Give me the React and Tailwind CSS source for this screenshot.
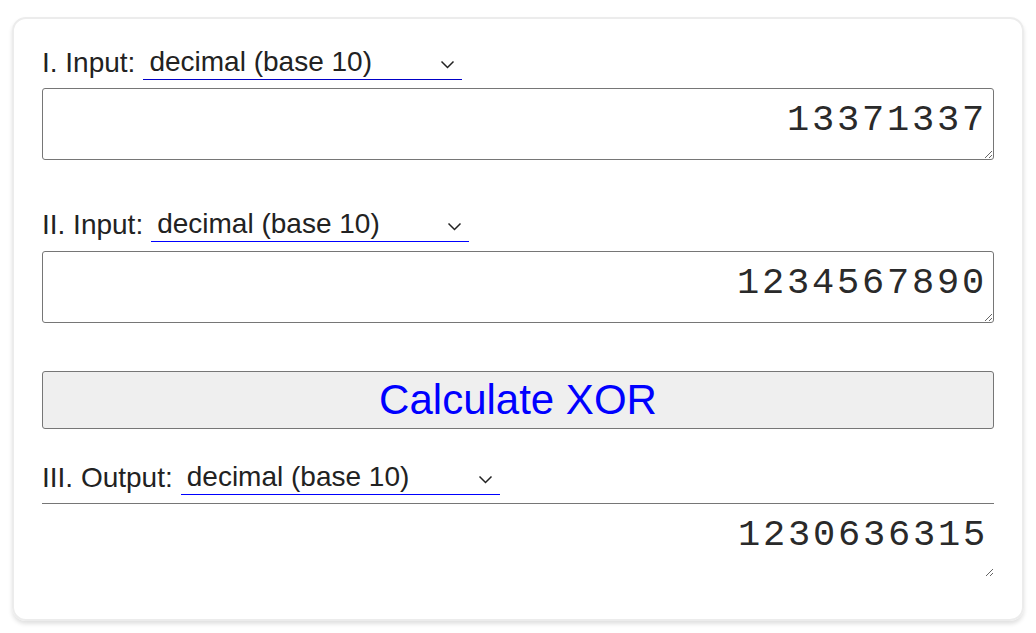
import React from 'react';

const Chevron = () => (
  <svg className="absolute right-[7px] top-[15px] pointer-events-none" width="15" height="9" viewBox="0 0 15 9" fill="none">
    <polyline points="1.5,1.5 7.5,7.5 13.5,1.5" stroke="#222" strokeWidth="1.5" />
  </svg>
);

const BaseSelect = ({ line, width }) => (
  <div className={`relative ${width}`}>
    <select
      defaultValue="10"
      className={`block appearance-none w-full h-[35px] pl-[6px] pr-[30px] pb-[1px] bg-transparent text-[28px] leading-[32px] text-[#222] border-0 border-b rounded-none outline-none ${line}`}
      style={{ fontFamily: '"Liberation Sans", Arial, sans-serif' }}
    >
      <option value="2">binary (base 2)</option>
      <option value="8">octal (base 8)</option>
      <option value="10">decimal (base 10)</option>
      <option value="16">hexadecimal (base 16)</option>
    </select>
    <Chevron />
  </div>
);

const Row = ({ label, line, width, className }) => (
  <div className={`flex items-end h-[35px] gap-[8px] ${className}`}>
    <span className="text-[28px] text-[#222] leading-[32px] pb-[1px]">{label}</span>
    <BaseSelect line={line} width={width} />
  </div>
);

const mono = { fontFamily: '"Liberation Mono", "Courier New", monospace' };
const area = 'block w-full text-right text-[37px] tracking-[2.8px] text-[#2a2a2a] pr-[6px] pt-[11px] leading-[40px] outline-none';

export default function App() {
  return (
    <div className="w-[1036px] h-[633px] bg-white pt-[17px] px-[12px]" style={{ fontFamily: '"Liberation Sans", Arial, sans-serif' }}>
      <div className="w-[1012px] border-2 border-[#ececec] rounded-[14px] shadow-[0_3px_4px_rgba(0,0,0,0.12)] px-[28px] pt-[26px] pb-[42px]">
        <Row label="I. Input:" line="border-[#0000c8]" width="w-[319px]" />
        <textarea
          defaultValue="13371337"
          className={`${area} mt-[8px] h-[72px] border border-[#767676] rounded-[3px]`}
          style={mono}
        />

        <Row label="II. Input:" line="border-[#0000ff]" width="w-[318px]" className="mt-[47px]" />
        <textarea
          defaultValue="1234567890"
          className={`${area} mt-[9px] h-[72px] border border-[#767676] rounded-[3px]`}
          style={mono}
        />

        <button className="block mt-[48px] w-full h-[58px] bg-[#efefef] border border-[#767676] rounded-[3px] text-[42px] text-[#0000ff] leading-none">
          Calculate XOR
        </button>

        <Row label="III. Output:" line="border-[#0000ff]" width="w-[319px]" className="mt-[31px]" />
        <textarea
          readOnly
          defaultValue="1230636315"
          className={`${area} mt-[8px] h-[74px] border-0 border-t border-[#767676]`}
          style={mono}
        />
      </div>
    </div>
  );
}
